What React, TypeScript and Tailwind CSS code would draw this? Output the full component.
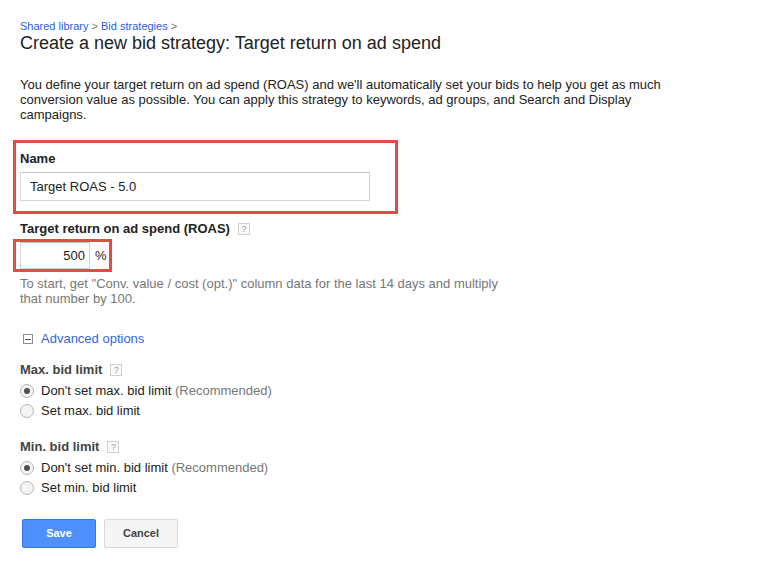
import React from 'react';

const font = { fontFamily: '"Liberation Sans", Arial, sans-serif' };

function HelpIcon() {
	return (
		<span className="ml-2 inline-flex h-[12px] w-[12px] items-center justify-center border border-[#d0d0d0] bg-[#fafafa] text-[9px] font-normal leading-none text-[#999]">
			?
		</span>
	);
}

function Radio({ checked, label, note }: { checked?: boolean; label: string; note?: string }) {
	return (
		<label className="flex h-5 items-center">
			<span className="flex h-[14px] w-[14px] items-center justify-center rounded-full border border-[#b5b5b5] bg-[#f4f4f4]">
				{checked && <span className="h-[6px] w-[6px] rounded-full bg-[#505050]" />}
			</span>
			<span className="ml-[7px] text-[13px] text-[#222]">
				{label}
				{note && <span className="text-[#777]"> {note}</span>}
			</span>
		</label>
	);
}

export default function App() {
	return (
		<div className="min-h-[577px] w-[775px] bg-white pl-5 pt-[19px]" style={font}>
			{/* Breadcrumb + title */}
			<div className="text-[11px] leading-[14px] text-[#777]">
				<span className="text-[#2a5fd3]">Shared library</span> &gt;{' '}
				<span className="text-[#2a5fd3]">Bid strategies</span> &gt;
			</div>
			<h1 className="text-[18px] leading-[20px] text-[#222]">Create a new bid strategy: Target return on ad spend</h1>

			<p className="mt-6 w-[655px] text-[13px] leading-[15px] text-[#222]">
				You define your target return on ad spend (ROAS) and we'll automatically set your bids to help you get as much
				conversion value as possible. You can apply this strategy to keywords, ad groups, and Search and Display
				campaigns.
			</p>

			{/* Name */}
			<div className="-ml-[7px] mt-[18px] w-[385px] border-[3px] border-[#e54a45] pb-[10px] pl-[4px] pt-2">
				<div className="text-[13px] font-bold leading-4 text-[#222]">Name</div>
				<div className="mt-[5px] flex h-[29px] w-[350px] items-center border border-[#d4d4d4] border-t-[#c0c0c0] pl-[9px] text-[13px] text-[#222]">
					Target ROAS - 5.0
				</div>
			</div>

			{/* ROAS */}
			<div className="mt-[7px] flex items-center text-[13px] font-bold leading-4 text-[#222]">
				Target return on ad spend (ROAS)
				<HelpIcon />
			</div>
			<div className="-ml-[7px] mt-[2px] flex h-[33px] w-[99px] items-center border-[3px] border-[#e54a45] pl-[4px]">
				<div className="flex h-[27px] w-[70px] items-center justify-end border border-[#d4d4d4] border-t-[#c0c0c0] pr-[4px] text-[13px] text-[#222]">
					500
				</div>
				<span className="ml-[5px] text-[13px] text-[#222]">%</span>
			</div>
			<p className="mt-1 w-[500px] text-[13px] leading-[15px] text-[#777]">
				To start, get "Conv. value / cost (opt.)" column data for the last 14 days and multiply that number by 100.
			</p>

			{/* Advanced options */}
			<div className="mt-[25px] flex h-4 items-center">
				<span className="ml-[3px] flex h-[10px] w-[10px] items-center justify-center border border-[#8c8c8c] bg-white">
					<span className="h-px w-[6px] bg-[#555]" />
				</span>
				<span className="ml-[8px] text-[13px] text-[#3367d6]">Advanced options</span>
			</div>

			<div className="mt-[15px] flex items-center text-[13px] font-bold leading-4 text-[#444]">
				Max. bid limit
				<HelpIcon />
			</div>
			<div className="mt-[3px]">
				<Radio checked label="Don't set max. bid limit" note="(Recommended)" />
				<Radio label="Set max. bid limit" />
			</div>

			<div className="mt-[18px] flex items-center text-[13px] font-bold leading-4 text-[#444]">
				Min. bid limit
				<HelpIcon />
			</div>
			<div className="mt-[3px]">
				<Radio checked label="Don't set min. bid limit" note="(Recommended)" />
				<Radio label="Set min. bid limit" />
			</div>

			{/* Buttons */}
			<div className="mt-[21px] flex gap-2 pl-[2px]">
				<button className="h-[29px] w-[74px] rounded-[2px] border border-[#3079ed] bg-[#4d90fe] text-[11px] font-bold text-white">
					Save
				</button>
				<button className="h-[29px] w-[74px] rounded-[2px] border border-[#d9d9d9] bg-[#f5f5f5] text-[11px] font-bold text-[#444]">
					Cancel
				</button>
			</div>
		</div>
	);
}
